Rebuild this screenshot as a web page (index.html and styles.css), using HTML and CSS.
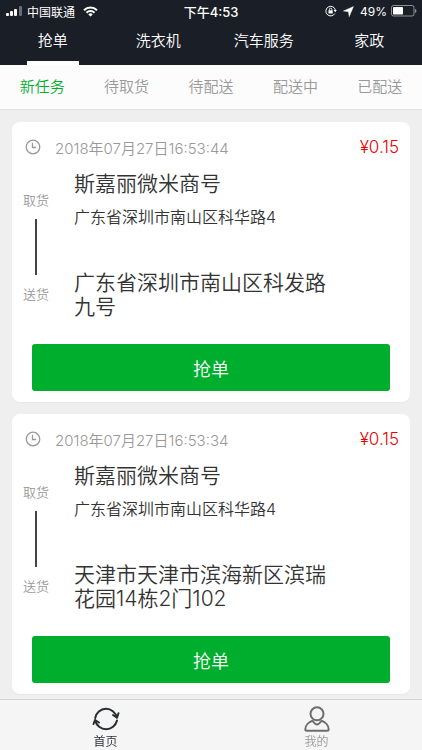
FILE: index.html
```html
<!DOCTYPE html>
<html lang="zh-CN">
<head>
<meta charset="utf-8">
<meta name="viewport" content="width=device-width, initial-scale=1">
<title>抢单</title>
<link rel="stylesheet" href="styles.css">
</head>
<body>
<header class="top">
  <div class="status">
    <div class="status-side">
      <svg class="signal" width="18" height="12" viewBox="0 0 18 12" fill="#fff" aria-hidden="true">
        <rect x="1" y="8" width="3" height="3" rx="1"/><rect x="5" y="6" width="3" height="5" rx="1"/><rect x="9" y="4" width="3" height="7" rx="1"/><rect x="14" y="1" width="3" height="10" rx="1" opacity=".35"/>
      </svg>
      <span>中国联通</span>
      <svg class="wifi" width="15" height="11" viewBox="0 0 15 11" fill="none" stroke="#fff" stroke-width="2" aria-hidden="true">
        <path d="M1 4.2a9.3 9.3 0 0 1 13 0M3.5 6.7a5.7 5.7 0 0 1 8 0"/><path d="M5.3 8.4a3.1 3.1 0 0 1 4.4 0L7.5 10.6z" fill="#fff" stroke="none"/>
      </svg>
    </div>
    <span class="time">下午4:53</span>
    <div class="status-side status-end">
      <svg width="12" height="12" viewBox="0 0 12 12" fill="none" stroke="#fff" aria-hidden="true">
        <path d="M9.8 8.6A4.8 4.8 0 1 1 10.4 5.2"/><path d="M8.6 5h3.2l-1.6 2.2z" fill="#fff" stroke="none"/><rect x="3.5" y="5.3" width="4.2" height="3.2" fill="#fff" stroke="none"/><path d="M4.4 5.5V4.4a1.2 1.2 0 0 1 2.4 0v1.1" stroke-width=".9"/>
      </svg>
      <svg class="arrow" width="11" height="11" viewBox="0 0 11 11" fill="#fff" aria-hidden="true"><path d="M10.5.5 6.2 10.7 5.400 5.800.4 5z" stroke="#fff" stroke-width=".4"/></svg>
      <span>49%</span>
      <svg width="26" height="12" viewBox="0 0 26 12" aria-hidden="true">
        <rect x=".5" y=".5" width="22.5" height="10.5" rx="2" fill="none" stroke="#fff" stroke-opacity=".5"/><rect x="2" y="2" width="10" height="7.5" rx=".8" fill="#fff"/><path d="M24 4v4c2-.8 2-3.2 0-4z" fill="#fff" opacity=".5"/>
      </svg>
    </div>
  </div>
  <nav class="tabs">
    <a class="tab tab-on" href="#grab">抢单</a>
    <a class="tab" href="#washer">洗衣机</a>
    <a class="tab" href="#car">汽车服务</a>
    <a class="tab" href="#home">家政</a>
  </nav>
</header>
<nav class="filters">
  <a class="filter filter-on" href="#new">新任务</a>
  <a class="filter" href="#pickup">待取货</a>
  <a class="filter" href="#waiting">待配送</a>
  <a class="filter" href="#delivering">配送中</a>
  <a class="filter" href="#done">已配送</a>
</nav>
<main class="orders">
  <article class="card">
    <div class="card-head">
      <svg class="clock" width="16" height="16" viewBox="0 0 16 16" fill="none" stroke="#999" stroke-width="1.3" aria-hidden="true"><circle cx="8" cy="8" r="6.8"/><path d="M7.5 3.8v4.7h3.6"/></svg>
      <time>2018年07月27日16:53:44</time>
      <span class="price">¥0.15</span>
    </div>
    <div class="route">
      <div class="rail"><span>取货</span><i class="rail-line"></i><span>送货</span></div>
      <div class="places">
        <h2 class="place">斯嘉丽微米商号</h2>
        <p class="address">广东省深圳市南山区科华路4</p>
        <p class="place">广东省深圳市南山区科发路九号</p>
      </div>
    </div>
    <button class="grab" type="button">抢单</button>
  </article>
  <article class="card">
    <div class="card-head">
      <svg class="clock" width="16" height="16" viewBox="0 0 16 16" fill="none" stroke="#999" stroke-width="1.3" aria-hidden="true"><circle cx="8" cy="8" r="6.8"/><path d="M7.5 3.8v4.7h3.6"/></svg>
      <time>2018年07月27日16:53:34</time>
      <span class="price">¥0.15</span>
    </div>
    <div class="route">
      <div class="rail"><span>取货</span><i class="rail-line"></i><span>送货</span></div>
      <div class="places">
        <h2 class="place">斯嘉丽微米商号</h2>
        <p class="address">广东省深圳市南山区科华路4</p>
        <p class="place">天津市天津市滨海新区滨瑞花园14栋2门102</p>
      </div>
    </div>
    <button class="grab" type="button">抢单</button>
  </article>
</main>
<nav class="dock">
  <a class="dock-item dock-on" href="#index">
    <svg width="28" height="26" viewBox="0 0 28 26" fill="none" stroke="#2b2d35" stroke-width="2" stroke-linecap="round" stroke-linejoin="round" aria-hidden="true">
      <path d="M3.200 12A11 11 0 0 1 24.800 11.500M25 14.500A11.200 11.200 0 0 1 3.200 14.500"/><path d="M21 9 25 11.700 26.500 7.300M1.500 18 3 14 7 16.500"/>
    </svg>
    <span>首页</span>
  </a>
  <a class="dock-item" href="#mine">
    <svg width="28" height="26" viewBox="0 0 28 26" fill="none" stroke="#6d6d6d" stroke-width="2" stroke-linejoin="round" aria-hidden="true">
      <circle cx="14" cy="7.800" r="6.500"/><path d="M9.500 14.800C5.500 16 2.500 19.500 2.300 23.200Q2.300 24.700 4 24.700H24Q25.700 24.700 25.700 23.200C25.500 19.500 22.500 16 18.500 14.800Q16 18.500 14 18.500T9.500 14.800z"/>
    </svg>
    <span>我的</span>
  </a>
</nav>
</body>
</html>
```
FILE: styles.css
```css
* { box-sizing: border-box; }

body {
  margin: 0;
  min-height: 100vh;
  display: flex;
  flex-direction: column;
  background: #efefef;
  color: #333;
  font-family: Inter, "Noto Sans CJK SC", sans-serif;
  font-size: 15px;
  font-weight: 350;
}

a { color: inherit; text-decoration: none; }
h2, p { margin: 0; font-weight: inherit; }
svg { flex: none; }

.top { background: #1a1e26; color: #fff; }

.status {
  display: flex;
  align-items: center;
  height: 22px;
  padding: 0 5px;
  font-size: 12px;
  font-weight: 400;
}
.status-side { flex: 1; display: flex; align-items: center; gap: 4px; }
.status-end { justify-content: flex-end; }
.wifi { margin-left: 4px; }
.arrow { margin: 0 2px; }
.time { font-size: 13px; font-weight: 500; }

.tabs { display: flex; height: 43px; }
.tab {
  flex: 1;
  display: flex;
  justify-content: center;
  line-height: 38px;
  position: relative;
}
.tab-on::after {
  content: "";
  position: absolute;
  bottom: 0;
  width: 52px;
  height: 4px;
  background: #fff;
}

.filters {
  display: flex;
  height: 45px;
  background: #fcfcfc;
  border-bottom: 1px solid #e0e0e0;
  color: #999;
}
.filter { flex: 1; text-align: center; line-height: 44px; }
.filter-on { color: #00ae2d; }

.orders {
  flex: 1;
  display: flex;
  flex-direction: column;
  gap: 12px;
  padding: 12px 12px 5px;
}
.card {
  padding-bottom: 11px;
  background: #fff;
  border-radius: 8px;
  box-shadow: 0 1px 0 #e8e8e8;
}
.card-head {
  display: flex;
  align-items: center;
  height: 50px;
  padding: 0 11px 0 13px;
  color: #999;
}
.clock { margin-right: 14px; }
.price { margin-left: auto; color: #e60000; font-size: 17px; }

.route { display: flex; }
.rail {
  display: flex;
  flex-direction: column;
  align-items: center;
  gap: 9px;
  width: 48px;
  margin-right: 14px;
  padding-top: 18px;
  color: #999;
  font-size: 13px;
  line-height: 20px;
}
.rail-line { width: 2px; height: 56px; background: #444; }
.places { flex: 1; padding-right: 74px; }
.place { font-size: 21px; line-height: 24px; }
.address { margin: 9px 0 42px; font-size: 16px; line-height: 24px; }

.grab {
  display: block;
  width: calc(100% - 40px);
  height: 47px;
  margin: 25px 20px 0;
  padding: 0;
  border: 0;
  border-radius: 3px;
  background: #00ae2d;
  color: #fff;
  font-family: inherit;
  font-size: 18px;
  font-weight: inherit;
}

.dock {
  position: sticky;
  bottom: 0;
  display: flex;
  height: 51px;
  background: #f5f5f5;
  border-top: 1px solid #d4d4d4;
}
.dock-item {
  flex: 1;
  display: flex;
  flex-direction: column;
  align-items: center;
  padding-top: 6px;
  color: #999;
  font-size: 12px;
  line-height: 20px;
}
.dock-on { color: #2b2d35; }
```
